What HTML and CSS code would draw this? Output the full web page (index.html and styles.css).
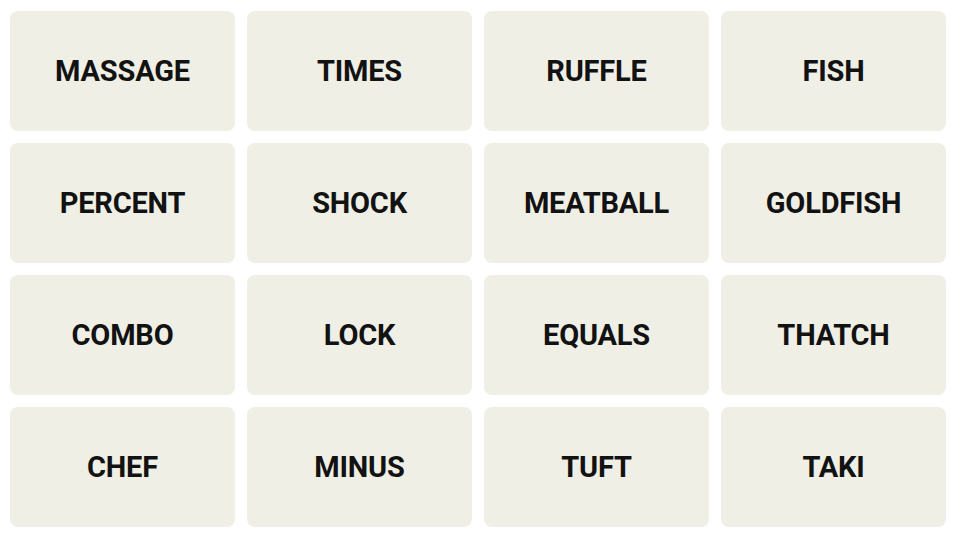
FILE: index.html
```html
<!DOCTYPE html>
<html lang="en">
<head>
<meta charset="utf-8">
<title>Connections</title>
<link rel="stylesheet" href="styles.css">
</head>
<body>
<main class="board">
  <div class="tile">MASSAGE</div>
  <div class="tile">TIMES</div>
  <div class="tile">RUFFLE</div>
  <div class="tile">FISH</div>
  <div class="tile">PERCENT</div>
  <div class="tile">SHOCK</div>
  <div class="tile">MEATBALL</div>
  <div class="tile">GOLDFISH</div>
  <div class="tile">COMBO</div>
  <div class="tile">LOCK</div>
  <div class="tile">EQUALS</div>
  <div class="tile">THATCH</div>
  <div class="tile">CHEF</div>
  <div class="tile">MINUS</div>
  <div class="tile">TUFT</div>
  <div class="tile">TAKI</div>
</main>
</body>
</html>
```
FILE: styles.css
```css
html, body {
  margin: 0;
  padding: 0;
  background: #ffffff;
}
.board {
  display: grid;
  grid-template-columns: repeat(4, 225px);
  grid-auto-rows: 120px;
  column-gap: 12px;
  row-gap: 12px;
  padding: 11px 0 0 10px;
}
.tile {
  display: flex;
  align-items: center;
  justify-content: center;
  background: #efefe6;
  border-radius: 8px;
  font-family: Roboto, "Liberation Sans", Arial, sans-serif;
  font-weight: 700;
  font-size: 29px;
  letter-spacing: -0.2px;
  color: #121212;
  text-transform: uppercase;
}
```
